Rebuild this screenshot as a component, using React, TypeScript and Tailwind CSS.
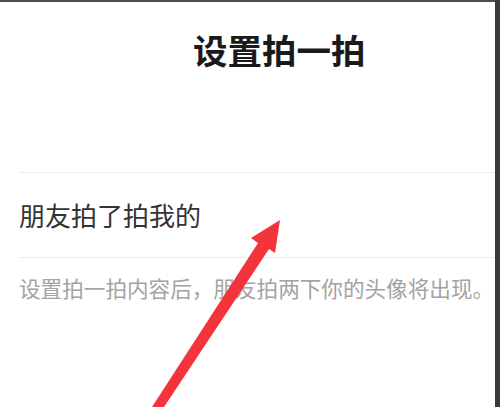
export default function App() {
  return (
    <div
      className="relative flex h-[407px] w-[500px] overflow-hidden bg-white"
      style={{ fontFamily: '"Noto Sans CJK SC", "Noto Sans", sans-serif' }}
    >
      <div className="flex flex-1 flex-col border-t-2 border-[#4d4d4d]">
        <h1 className="ml-[193px] mt-[30px] text-[34.5px] font-bold leading-[35px] tracking-normal text-[#1a1a1a]">
          设置拍一拍
        </h1>

        <div className="ml-[19px] mt-[105px] border-t border-[#ececec]">
          <div className="py-[29px] text-[26px] leading-[26px] text-[#333333]">朋友拍了拍我的</div>
        </div>

        <div className="ml-[19px] border-t border-[#ececec] pt-[19px]">
          <p className="whitespace-nowrap text-[21.6px] leading-[22px] text-[#a3a3a3]">
            设置拍一拍内容后，朋友拍两下你的头像将出现。
          </p>
        </div>
      </div>

      <div className="w-[5px] bg-[#3a3937]" />

      {/* red annotation arrow */}
      <svg
        className="pointer-events-none absolute inset-0"
        width="500"
        height="407"
        viewBox="0 0 500 407"
      >
        <polygon
          points="280,220 251,238 258,243 152,407 164,407 269,249 275,253"
          fill="#f4343c"
        />
      </svg>
    </div>
  );
}
